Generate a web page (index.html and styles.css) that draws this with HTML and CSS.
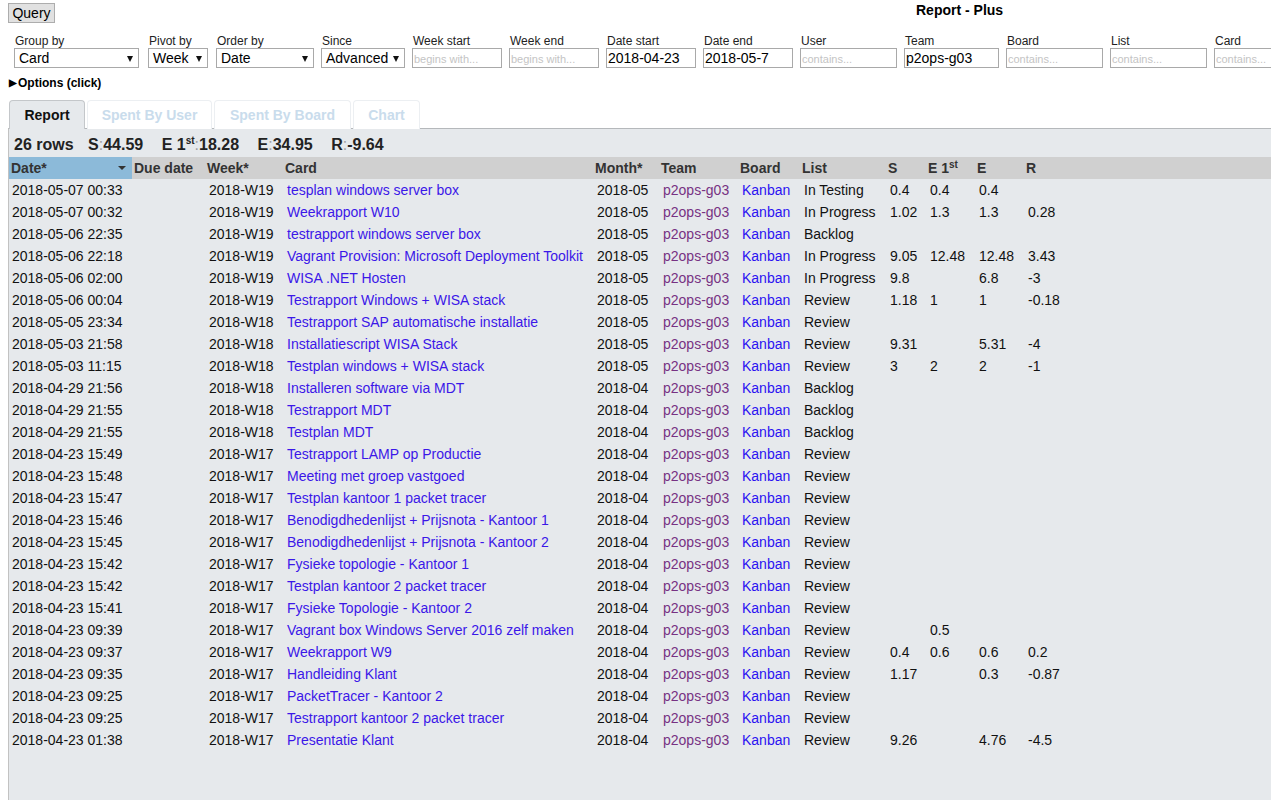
FILE: index.html
```html
<!DOCTYPE html>
<html>
<head>
<meta charset="utf-8">
<title>Report - Plus</title>
<link rel="stylesheet" href="styles.css">
</head>
<body>
<div class="top">
  <button class="query">Query</button>
  <div class="title">Report - Plus</div>
</div>
<div class="filters">
  <div class="f f-group"><label>Group by</label><span class="sel w125"><span class="v">Card</span><span class="arr"></span></span></div>
  <div class="f f-pivot"><label>Pivot by</label><span class="sel w60"><span class="v">Week</span><span class="arr"></span></span></div>
  <div class="f f-order"><label>Order by</label><span class="sel w98"><span class="v">Date</span><span class="arr"></span></span></div>
  <div class="f"><label>Since</label><span class="sel w84"><span class="v">Advanced</span><span class="arr"></span></span></div>
  <div class="f"><label>Week start</label><input class="in w90" placeholder="begins with..."></div>
  <div class="f"><label>Week end</label><input class="in w90" placeholder="begins with..."></div>
  <div class="f"><label>Date start</label><input class="in w90" value="2018-04-23"></div>
  <div class="f"><label>Date end</label><input class="in w90" value="2018-05-7"></div>
  <div class="f"><label>User</label><input class="in w97" placeholder="contains..."></div>
  <div class="f"><label>Team</label><input class="in w95" value="p2ops-g03"></div>
  <div class="f"><label>Board</label><input class="in w97" placeholder="contains..."></div>
  <div class="f"><label>List</label><input class="in w97" placeholder="contains..."></div>
  <div class="f"><label>Card</label><input class="in w97" placeholder="contains..."></div>
</div>
<div class="options"><span class="tri">▶</span>Options (click)</div>
<div class="tabs">
  <div class="tab active t1">Report</div>
  <div class="tab t2">Spent By User</div>
  <div class="tab t3">Spent By Board</div>
  <div class="tab t4">Chart</div>
</div>
<div class="panel">
  <div class="summary">
    <span class="sum first">26 rows</span>
    <span class="sum">S<span class="c">:</span>44.59</span>
    <span class="sum">E 1<sup>st</sup><span class="c">:</span>18.28</span>
    <span class="sum">E<span class="c">:</span>34.95</span>
    <span class="sum">R<span class="c">:</span>-9.64</span>
  </div>
  <table class="grid">
    <colgroup>
      <col style="width:123px"><col style="width:73px"><col style="width:78px"><col style="width:310px"><col style="width:66px"><col style="width:79px"><col style="width:62px"><col style="width:86px"><col style="width:40px"><col style="width:49px"><col style="width:49px"><col>
    </colgroup>
    <thead>
      <tr>
        <th class="sorted">Date*<span class="sortarr"></span></th>
        <th>Due date</th><th class="wk">Week*</th><th>Card</th><th>Month*</th><th>Team</th><th>Board</th><th>List</th><th>S</th><th>E 1<sup>st</sup></th><th>E</th><th>R</th>
      </tr>
    </thead>
    <tbody>
      <tr><td>2018-05-07 00:33</td><td></td><td>2018-W19</td><td><a class="card">tesplan windows server box</a></td><td>2018-05</td><td><a class="team">p2ops-g03</a></td><td><a class="board">Kanban</a></td><td>In Testing</td><td>0.4</td><td>0.4</td><td>0.4</td><td></td></tr>
      <tr><td>2018-05-07 00:32</td><td></td><td>2018-W19</td><td><a class="card">Weekrapport W10</a></td><td>2018-05</td><td><a class="team">p2ops-g03</a></td><td><a class="board">Kanban</a></td><td>In Progress</td><td>1.02</td><td>1.3</td><td>1.3</td><td>0.28</td></tr>
      <tr><td>2018-05-06 22:35</td><td></td><td>2018-W19</td><td><a class="card">testrapport windows server box</a></td><td>2018-05</td><td><a class="team">p2ops-g03</a></td><td><a class="board">Kanban</a></td><td>Backlog</td><td></td><td></td><td></td><td></td></tr>
      <tr><td>2018-05-06 22:18</td><td></td><td>2018-W19</td><td><a class="card">Vagrant Provision: Microsoft Deployment Toolkit</a></td><td>2018-05</td><td><a class="team">p2ops-g03</a></td><td><a class="board">Kanban</a></td><td>In Progress</td><td>9.05</td><td>12.48</td><td>12.48</td><td>3.43</td></tr>
      <tr><td>2018-05-06 02:00</td><td></td><td>2018-W19</td><td><a class="card">WISA .NET Hosten</a></td><td>2018-05</td><td><a class="team">p2ops-g03</a></td><td><a class="board">Kanban</a></td><td>In Progress</td><td>9.8</td><td></td><td>6.8</td><td>-3</td></tr>
      <tr><td>2018-05-06 00:04</td><td></td><td>2018-W19</td><td><a class="card">Testrapport Windows + WISA stack</a></td><td>2018-05</td><td><a class="team">p2ops-g03</a></td><td><a class="board">Kanban</a></td><td>Review</td><td>1.18</td><td>1</td><td>1</td><td>-0.18</td></tr>
      <tr><td>2018-05-05 23:34</td><td></td><td>2018-W18</td><td><a class="card">Testrapport SAP automatische installatie</a></td><td>2018-05</td><td><a class="team">p2ops-g03</a></td><td><a class="board">Kanban</a></td><td>Review</td><td></td><td></td><td></td><td></td></tr>
      <tr><td>2018-05-03 21:58</td><td></td><td>2018-W18</td><td><a class="card">Installatiescript WISA Stack</a></td><td>2018-05</td><td><a class="team">p2ops-g03</a></td><td><a class="board">Kanban</a></td><td>Review</td><td>9.31</td><td></td><td>5.31</td><td>-4</td></tr>
      <tr><td>2018-05-03 11:15</td><td></td><td>2018-W18</td><td><a class="card">Testplan windows + WISA stack</a></td><td>2018-05</td><td><a class="team">p2ops-g03</a></td><td><a class="board">Kanban</a></td><td>Review</td><td>3</td><td>2</td><td>2</td><td>-1</td></tr>
      <tr><td>2018-04-29 21:56</td><td></td><td>2018-W18</td><td><a class="card">Installeren software via MDT</a></td><td>2018-04</td><td><a class="team">p2ops-g03</a></td><td><a class="board">Kanban</a></td><td>Backlog</td><td></td><td></td><td></td><td></td></tr>
      <tr><td>2018-04-29 21:55</td><td></td><td>2018-W18</td><td><a class="card">Testrapport MDT</a></td><td>2018-04</td><td><a class="team">p2ops-g03</a></td><td><a class="board">Kanban</a></td><td>Backlog</td><td></td><td></td><td></td><td></td></tr>
      <tr><td>2018-04-29 21:55</td><td></td><td>2018-W18</td><td><a class="card">Testplan MDT</a></td><td>2018-04</td><td><a class="team">p2ops-g03</a></td><td><a class="board">Kanban</a></td><td>Backlog</td><td></td><td></td><td></td><td></td></tr>
      <tr><td>2018-04-23 15:49</td><td></td><td>2018-W17</td><td><a class="card">Testrapport LAMP op Productie</a></td><td>2018-04</td><td><a class="team">p2ops-g03</a></td><td><a class="board">Kanban</a></td><td>Review</td><td></td><td></td><td></td><td></td></tr>
      <tr><td>2018-04-23 15:48</td><td></td><td>2018-W17</td><td><a class="card">Meeting met groep vastgoed</a></td><td>2018-04</td><td><a class="team">p2ops-g03</a></td><td><a class="board">Kanban</a></td><td>Review</td><td></td><td></td><td></td><td></td></tr>
      <tr><td>2018-04-23 15:47</td><td></td><td>2018-W17</td><td><a class="card">Testplan kantoor 1 packet tracer</a></td><td>2018-04</td><td><a class="team">p2ops-g03</a></td><td><a class="board">Kanban</a></td><td>Review</td><td></td><td></td><td></td><td></td></tr>
      <tr><td>2018-04-23 15:46</td><td></td><td>2018-W17</td><td><a class="card">Benodigdhedenlijst + Prijsnota - Kantoor 1</a></td><td>2018-04</td><td><a class="team">p2ops-g03</a></td><td><a class="board">Kanban</a></td><td>Review</td><td></td><td></td><td></td><td></td></tr>
      <tr><td>2018-04-23 15:45</td><td></td><td>2018-W17</td><td><a class="card">Benodigdhedenlijst + Prijsnota - Kantoor 2</a></td><td>2018-04</td><td><a class="team">p2ops-g03</a></td><td><a class="board">Kanban</a></td><td>Review</td><td></td><td></td><td></td><td></td></tr>
      <tr><td>2018-04-23 15:42</td><td></td><td>2018-W17</td><td><a class="card">Fysieke topologie - Kantoor 1</a></td><td>2018-04</td><td><a class="team">p2ops-g03</a></td><td><a class="board">Kanban</a></td><td>Review</td><td></td><td></td><td></td><td></td></tr>
      <tr><td>2018-04-23 15:42</td><td></td><td>2018-W17</td><td><a class="card">Testplan kantoor 2 packet tracer</a></td><td>2018-04</td><td><a class="team">p2ops-g03</a></td><td><a class="board">Kanban</a></td><td>Review</td><td></td><td></td><td></td><td></td></tr>
      <tr><td>2018-04-23 15:41</td><td></td><td>2018-W17</td><td><a class="card">Fysieke Topologie - Kantoor 2</a></td><td>2018-04</td><td><a class="team">p2ops-g03</a></td><td><a class="board">Kanban</a></td><td>Review</td><td></td><td></td><td></td><td></td></tr>
      <tr><td>2018-04-23 09:39</td><td></td><td>2018-W17</td><td><a class="card">Vagrant box Windows Server 2016 zelf maken</a></td><td>2018-04</td><td><a class="team">p2ops-g03</a></td><td><a class="board">Kanban</a></td><td>Review</td><td></td><td>0.5</td><td></td><td></td></tr>
      <tr><td>2018-04-23 09:37</td><td></td><td>2018-W17</td><td><a class="card">Weekrapport W9</a></td><td>2018-04</td><td><a class="team">p2ops-g03</a></td><td><a class="board">Kanban</a></td><td>Review</td><td>0.4</td><td>0.6</td><td>0.6</td><td>0.2</td></tr>
      <tr><td>2018-04-23 09:35</td><td></td><td>2018-W17</td><td><a class="card">Handleiding Klant</a></td><td>2018-04</td><td><a class="team">p2ops-g03</a></td><td><a class="board">Kanban</a></td><td>Review</td><td>1.17</td><td></td><td>0.3</td><td>-0.87</td></tr>
      <tr><td>2018-04-23 09:25</td><td></td><td>2018-W17</td><td><a class="card">PacketTracer - Kantoor 2</a></td><td>2018-04</td><td><a class="team">p2ops-g03</a></td><td><a class="board">Kanban</a></td><td>Review</td><td></td><td></td><td></td><td></td></tr>
      <tr><td>2018-04-23 09:25</td><td></td><td>2018-W17</td><td><a class="card">Testrapport kantoor 2 packet tracer</a></td><td>2018-04</td><td><a class="team">p2ops-g03</a></td><td><a class="board">Kanban</a></td><td>Review</td><td></td><td></td><td></td><td></td></tr>
      <tr><td>2018-04-23 01:38</td><td></td><td>2018-W17</td><td><a class="card">Presentatie Klant</a></td><td>2018-04</td><td><a class="team">p2ops-g03</a></td><td><a class="board">Kanban</a></td><td>Review</td><td>9.26</td><td></td><td>4.76</td><td>-4.5</td></tr>
    </tbody>
  </table>
</div>
</body>
</html>
```
FILE: styles.css
```css
* { box-sizing: border-box; }
html, body { margin: 0; padding: 0; background: #fff; overflow: hidden; }
body {
  font-family: "Liberation Sans", Arial, sans-serif;
  font-size: 14px;
  color: #111;
  width: 1271px;
  height: 800px;
}
.top {
  display: flex;
  align-items: flex-start;
  padding: 3px 0 0 8px;
  height: 34px;
}
.query {
  font-family: "Liberation Sans", Arial, sans-serif;
  font-size: 14px;
  color: #000;
  height: 20px;
  width: 47px;
  padding: 0;
  margin: 0;
  background: #e1e1e1;
  border: 1px solid #adadad;
  border-radius: 0;
  line-height: 17px;
}
.title {
  margin-left: 861px;
  margin-top: -1px;
  font-weight: bold;
  font-size: 14px;
  color: #000;
}
.filters {
  display: flex;
  gap: 7px;
  padding-left: 14px;
  white-space: nowrap;
}
.f { display: flex; flex-direction: column; flex: none; }
.f-group { margin-right: 2px; }
.f-pivot { margin-right: 1px; }
.f label {
  font-size: 12px;
  color: #222;
  line-height: 14px;
  height: 14px;
  padding-left: 1px;
}
.sel {
  position: relative;
  display: block;
  height: 20px;
  border: 1px solid #a9a9a9;
  background: #fff;
  font-size: 14px;
  line-height: 18px;
  padding-left: 4px;
  color: #000;
}
.sel .arr {
  position: absolute;
  right: 5px;
  top: 7px;
  width: 0;
  height: 0;
  border-left: 3.5px solid transparent;
  border-right: 3.5px solid transparent;
  border-top: 6px solid #111;
}
.in {
  display: block;
  height: 20px;
  border: 1px solid #a9a9a9;
  font-family: "Liberation Sans", Arial, sans-serif;
  font-size: 14px;
  padding: 0 1px;
  margin: 0;
  color: #000;
  outline: none;
}
.in::placeholder { color: #c4c4c4; font-size: 11px; }
.w125 { width: 125px; }
.w60 { width: 60px; }
.w98 { width: 98px; }
.w84 { width: 84px; }
.w90 { width: 90px; }
.w95 { width: 95px; }
.w97 { width: 97px; }
.options {
  font-size: 12px;
  font-weight: bold;
  color: #000;
  padding: 8px 0 0 9px;
  height: 32px;
  line-height: 14px;
}
.options .tri { font-size: 10px; margin-right: 1px; position: relative; top: -1px; }
.tabs {
  display: flex;
  gap: 2px;
  padding-left: 9px;
  height: 28px;
  position: relative;
  z-index: 1;
}
.tab {
  height: 29px;
  padding: 0;
  text-align: center;
  line-height: 28px;
  font-weight: bold;
  font-size: 14px;
  color: #c9dcec;
  background: #fff;
  border: 1px solid #eceff2;
  border-bottom: none;
  border-radius: 4px 4px 0 0;
  flex: none;
}
.t1 { width: 76px; }
.t2 { width: 125px; }
.t3 { width: 137px; }
.t4 { width: 67px; }
.tab.active {
  color: #111;
  background: #e6e9ec;
  border-color: #c4c7ca;
}
.panel {
  margin-left: 8px;
  background: #e6e9ec;
  border-top: 1px solid #b5b8bb;
  border-left: 1px solid #c2c2c2;
  height: 700px;
}
.summary {
  height: 28px;
  padding: 7px 0 0 5px;
  font-size: 16px;
  font-weight: bold;
  color: #222;
  line-height: 18px;
  white-space: nowrap;
}
.sum { margin-right: 14px; }
.sum.first { margin-right: 10px; }
.sum .c { color: #a0a0a0; font-weight: normal; }
sup { font-size: 10px; line-height: 0; vertical-align: 6px; }
.grid {
  width: 100%;
  table-layout: fixed;
  border-collapse: collapse;
  border-spacing: 0;
}
.grid th {
  background: #d0d0d0;
  height: 22px;
  text-align: left;
  font-weight: bold;
  font-size: 14px;
  color: #333;
  padding: 0 0 0 2px;
  white-space: nowrap;
  overflow: hidden;
}
.grid th sup { font-size: 10px; vertical-align: 5px; }
.grid th.sorted {
  background: #8cbad9;
  position: relative;
}
.sortarr {
  position: absolute;
  right: 6px;
  top: 9px;
  width: 0;
  height: 0;
  border-left: 4px solid transparent;
  border-right: 4px solid transparent;
  border-top: 4px solid #333;
}
.grid td {
  height: 22px;
  padding: 0 0 0 4px;
  white-space: nowrap;
  overflow: hidden;
  color: #111;
  font-size: 14px;
}
.grid td:first-child { padding-left: 3px; }
a { text-decoration: none; cursor: pointer; }
a.card { color: #3b17e8; }
a.team { color: #773283; }
a.board { color: #2b12f2; }
```
